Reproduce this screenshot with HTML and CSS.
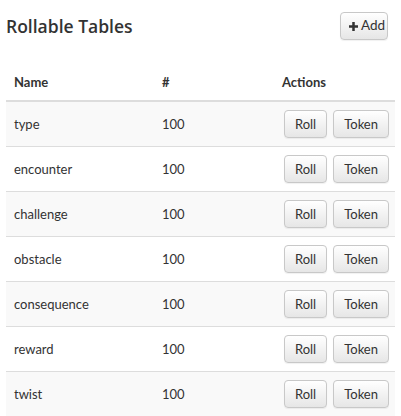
FILE: index.html
```html
<!DOCTYPE html>
<html>
<head>
<meta charset="utf-8">
<link rel="stylesheet" href="styles.css">
</head>
<body>
<div class="page">
  <div class="topbar">
    <h1 class="title">Rollable Tables</h1>
    <button class="btn btn-add"><svg class="plus" viewBox="0 0 10 10" width="9" height="9"><path d="M3.6 0h2.8v3.6H10v2.8H6.4V10H3.6V6.4H0V3.6h3.6z" fill="#333"/></svg>Add</button>
  </div>
  <table class="tbl">
    <thead>
      <tr><th class="c-name">Name</th><th class="c-num">#</th><th class="c-act">Actions</th></tr>
    </thead>
    <tbody>
      <tr><td>type</td><td>100</td><td class="acts"><button class="btn">Roll</button><button class="btn">Token</button></td></tr>
      <tr><td>encounter</td><td>100</td><td class="acts"><button class="btn">Roll</button><button class="btn">Token</button></td></tr>
      <tr><td>challenge</td><td>100</td><td class="acts"><button class="btn">Roll</button><button class="btn">Token</button></td></tr>
      <tr><td>obstacle</td><td>100</td><td class="acts"><button class="btn">Roll</button><button class="btn">Token</button></td></tr>
      <tr><td>consequence</td><td>100</td><td class="acts"><button class="btn">Roll</button><button class="btn">Token</button></td></tr>
      <tr><td>reward</td><td>100</td><td class="acts"><button class="btn">Roll</button><button class="btn">Token</button></td></tr>
      <tr><td>twist</td><td>100</td><td class="acts"><button class="btn">Roll</button><button class="btn">Token</button></td></tr>
    </tbody>
  </table>
</div>
</body>
</html>
```
FILE: styles.css
```css
html, body {
  margin: 0;
  padding: 0;
  background: #fff;
}
body {
  font-family: Lato, "Noto Sans", sans-serif;
  font-size: 13px;
  color: #333;
}
.page {
  padding: 0 6px;
}
.topbar {
  display: flex;
  align-items: center;
  justify-content: space-between;
  height: 52px;
  padding-right: 7px;
}
.title {
  margin: 0;
  font-family: "Open Sans", Lato, sans-serif;
  font-size: 17.5px;
  font-weight: 600;
  color: #333;
}
.btn {
  font-family: inherit;
  font-size: 13px;
  color: #333;
  height: 28px;
  padding: 0 10px;
  border: 1px solid #c8c8c8;
  border-radius: 4px;
  background: linear-gradient(#ffffff, #e6e6e6);
  box-shadow: 0 1px 1px rgba(0,0,0,0.06);
  display: inline-flex;
  align-items: center;
  justify-content: center;
  line-height: 1;
  flex-shrink: 0;
}
.btn-add {
  width: 48px;
  padding: 0 0 0 8px;
  justify-content: flex-start;
  font-size: 13.5px;
}
.plus {
  margin-right: 3px;
  flex-shrink: 0;
}
.tbl {
  width: 100%;
  margin-top: 12px;
  border-collapse: collapse;
  table-layout: fixed;
}
.tbl th {
  text-align: left;
  font-weight: 700;
  padding: 8px;
  height: 20px;
  border-bottom: 2px solid #ddd;
}
.c-name { width: 132px; }
.c-num { width: 104px; }
.tbl td {
  padding: 8px;
  height: 28px;
  border-top: 1px solid #ddd;
  vertical-align: middle;
}
.tbl tbody tr:nth-child(odd) td {
  background: #f9f9f9;
}
.tbl thead + tbody tr:first-child td {
  border-top: 0;
}
.tbl td.acts {
  text-align: right;
  padding-right: 6px;
  white-space: nowrap;
}
.acts .btn + .btn {
  margin-left: 6px;
}
```
